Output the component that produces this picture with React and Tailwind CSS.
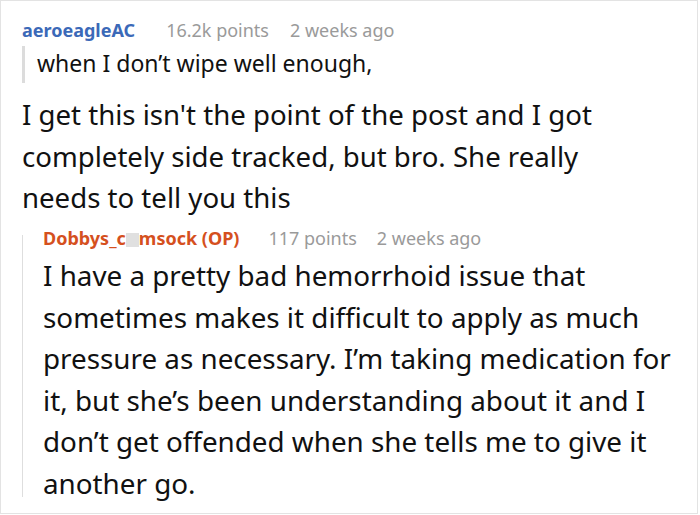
export default function App() {
  const font = { fontFamily: '"Noto Sans", "Open Sans", sans-serif' };
  const body1 = [
    "I get this isn't the point of the post and I got",
    "completely side tracked, but bro. She really",
    "needs to tell you this",
  ];
  const body2 = [
    "I have a pretty bad hemorrhoid issue that",
    "sometimes makes it difficult to apply as much",
    "pressure as necessary. I\u2019m taking medication for",
    "it, but she\u2019s been understanding about it and I",
    "don\u2019t get offended when she tells me to give it",
    "another go.",
  ];
  return (
    <div className="w-[700px] h-[515px] bg-white overflow-hidden" style={font}>
      <div className="w-[698px] h-[514px] border border-[#e3e3e3] pl-[21px] pt-[17px]">
        <div className="flex items-baseline text-[18px] leading-[24px]">
          <span className="font-bold text-[#3b69b8]">aeroeagleAC</span>
          <span className="ml-[31px] text-[#9a9a9a]">16.2k points</span>
          <span className="ml-[21px] text-[#9a9a9a]">2 weeks ago</span>
        </div>
        <div className="mt-[4px] border-l-[3px] border-[#dcdcdc] pl-[12px] pb-[2px] text-[23px] leading-[35px] text-[#111]">
          when I don&rsquo;t wipe well enough,
        </div>
        <div className="mt-[11px] text-[27.6px] leading-[41.5px] text-[#111]">
          {body1.map((l) => (
            <div key={l} className="whitespace-nowrap">{l}</div>
          ))}
        </div>
        <div className="mt-[7.5px] flex">
          <div className="w-px shrink-0 bg-[#dedede] mt-[9px] mb-[7px]"></div>
          <div className="pl-[20px]">
            <div className="flex items-baseline text-[18px] leading-[24px]">
              <span className="font-bold text-[#d5501e] whitespace-nowrap">
                Dobbys_c<span className="inline-block w-[13px] h-[14px] bg-[#e0e0e0] align-[-2px]"></span>msock (OP)
              </span>
              <span className="ml-[29px] text-[#9a9a9a]">117 points</span>
              <span className="ml-[20px] text-[#9a9a9a]">2 weeks ago</span>
            </div>
            <div className="mt-[5px] text-[27.8px] leading-[41.5px] text-[#111]">
              {body2.map((l) => (
                <div key={l} className="whitespace-nowrap">{l}</div>
              ))}
            </div>
          </div>
        </div>
      </div>
    </div>
  );
}
